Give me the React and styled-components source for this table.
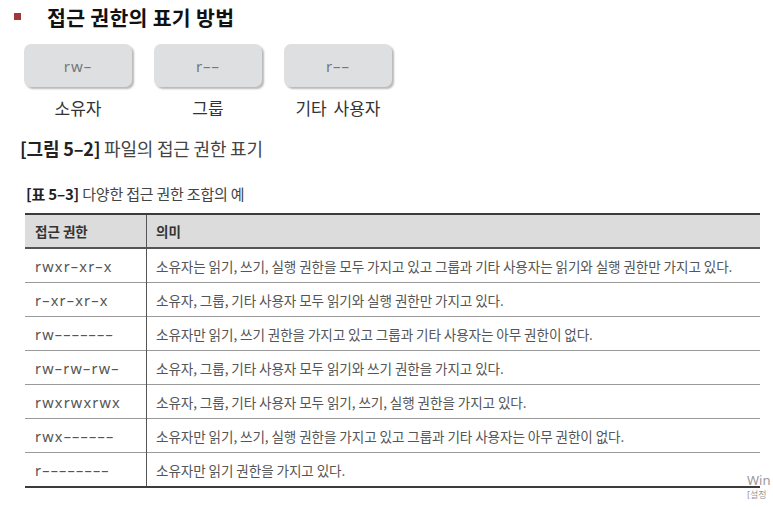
import React from 'react';
import styled, { createGlobalStyle } from 'styled-components';

const GlobalStyle = createGlobalStyle`
  html, body {
    margin: 0;
    padding: 0;
    background: #fff;
  }
  body {
    font-family: "Noto Sans CJK KR", "Noto Sans", sans-serif;
    color: #333;
  }
`;

const Page = styled.div`
  position: relative;
  width: 773px;
  height: 507px;
  overflow: hidden;
  box-sizing: border-box;
`;

const Heading = styled.h2`
  display: flex;
  align-items: center;
  margin: 0;
  padding-left: 14px;
  height: 33px;
  font-size: 20.5px;
  font-weight: 700;
  color: #111;
  letter-spacing: 0.3px;
`;

const Square = styled.span`
  width: 7px;
  height: 7px;
  background: #a0383a;
  margin-right: 26px;
`;

const Perms = styled.div`
  display: flex;
  gap: 20px;
  padding-left: 23px;
  margin-top: 11px;
`;

const PermItem = styled.div`
  display: flex;
  flex-direction: column;
  align-items: center;
  width: 110px;
`;

const PermBox = styled.div`
  width: 108px;
  height: 43px;
  border-radius: 7px;
  background: #dedfe1;
  box-shadow: 2px 2px 2px rgba(0, 0, 0, 0.28);
  display: flex;
  align-items: center;
  justify-content: center;
  font-family: "Noto Sans", sans-serif;
  font-size: 15px;
  color: #777;
  letter-spacing: 1px;
`;

const PermLabel = styled.div`
  margin-top: 9px;
  font-size: 17px;
  color: #333;
  line-height: 24px;
  word-spacing: 3px;
`;

const FigCaption = styled.p`
  margin: 16px 0 0 20px;
  font-size: 18px;
  line-height: 24px;
  color: #444;
  letter-spacing: -0.2px;
  b {
    font-weight: 700;
    color: #222;
  }
`;

const TableCaption = styled.p`
  margin: 24px 0 0 26px;
  font-size: 15px;
  line-height: 20px;
  color: #444;
  letter-spacing: -0.2px;
  b {
    font-weight: 700;
    color: #222;
  }
`;

const Table = styled.table`
  margin: 9px 0 0 25px;
  width: 735px;
  border-collapse: collapse;
  border-top: 2px solid #3c3c3c;
  border-bottom: 2px solid #3c3c3c;
`;

const HeadRow = styled.tr`
  background: #dcdcdc;
  border-bottom: 2px solid #555;
`;

const Th = styled.th`
  height: 32px;
  padding: 0 0 0 ${({ $first }) => ($first ? '10px' : '9px')};
  text-align: left;
  font-size: 13.5px;
  font-weight: 700;
  color: #333;
  width: ${({ $first }) => ($first ? '111px' : 'auto')};
  border-left: ${({ $first }) => ($first ? 'none' : '1.5px solid #555')};
`;

const Row = styled.tr`
  border-top: 1.5px solid #9a9a9a;
  &:first-of-type {
    border-top: none;
  }
`;

const Code = styled.td`
  height: 33px;
  padding: 0 0 0 10px;
  font-family: "Noto Sans", sans-serif;
  font-size: 14.5px;
  color: #555;
  letter-spacing: 1.2px;
`;

const Desc = styled.td`
  height: 33px;
  padding: 0 0 0 9px;
  border-left: 1.5px solid #555;
  font-size: 13.6px;
  color: #555;
  letter-spacing: -0.1px;
`;

const Watermark = styled.div`
  position: absolute;
  right: 0;
  top: 474px;
  display: flex;
  flex-direction: column;
  align-items: flex-start;
  gap: 3px;
  width: 26px;
  color: #999;
  font-family: "Noto Sans", "Noto Sans CJK KR", sans-serif;
  span:first-child {
    font-size: 13px;
    line-height: 13px;
    white-space: nowrap;
  }
  span:last-child {
    font-size: 9px;
    line-height: 10px;
    white-space: nowrap;
  }
`;

const perms = [
  { code: 'rw–', label: '소유자' },
  { code: 'r––', label: '그룹' },
  { code: 'r––', label: '기타 사용자' },
];

const rows = [
  ['rwxr–xr–x', '소유자는 읽기, 쓰기, 실행 권한을 모두 가지고 있고 그룹과 기타 사용자는 읽기와 실행 권한만 가지고 있다.'],
  ['r–xr–xr–x', '소유자, 그룹, 기타 사용자 모두 읽기와 실행 권한만 가지고 있다.'],
  ['rw–––––––', '소유자만 읽기, 쓰기 권한을 가지고 있고 그룹과 기타 사용자는 아무 권한이 없다.'],
  ['rw–rw–rw–', '소유자, 그룹, 기타 사용자 모두 읽기와 쓰기 권한을 가지고 있다.'],
  ['rwxrwxrwx', '소유자, 그룹, 기타 사용자 모두 읽기, 쓰기, 실행 권한을 가지고 있다.'],
  ['rwx––––––', '소유자만 읽기, 쓰기, 실행 권한을 가지고 있고 그룹과 기타 사용자는 아무 권한이 없다.'],
  ['r––––––––', '소유자만 읽기 권한을 가지고 있다.'],
];

export default function App() {
  return (
    <Page>
      <GlobalStyle />
      <Heading>
        <Square />
        접근 권한의 표기 방법
      </Heading>
      <Perms>
        {perms.map((p, i) => (
          <PermItem key={i}>
            <PermBox>{p.code}</PermBox>
            <PermLabel>{p.label}</PermLabel>
          </PermItem>
        ))}
      </Perms>
      <FigCaption>
        <b>[그림 5–2]</b> 파일의 접근 권한 표기
      </FigCaption>
      <TableCaption>
        <b>[표 5–3]</b> 다양한 접근 권한 조합의 예
      </TableCaption>
      <Table>
        <thead>
          <HeadRow>
            <Th $first>접근 권한</Th>
            <Th>의미</Th>
          </HeadRow>
        </thead>
        <tbody>
          {rows.map(([code, desc], i) => (
            <Row key={i}>
              <Code>{code}</Code>
              <Desc>{desc}</Desc>
            </Row>
          ))}
        </tbody>
      </Table>
      <Watermark>
        <span>Win</span>
        <span>[설정</span>
      </Watermark>
    </Page>
  );
}
